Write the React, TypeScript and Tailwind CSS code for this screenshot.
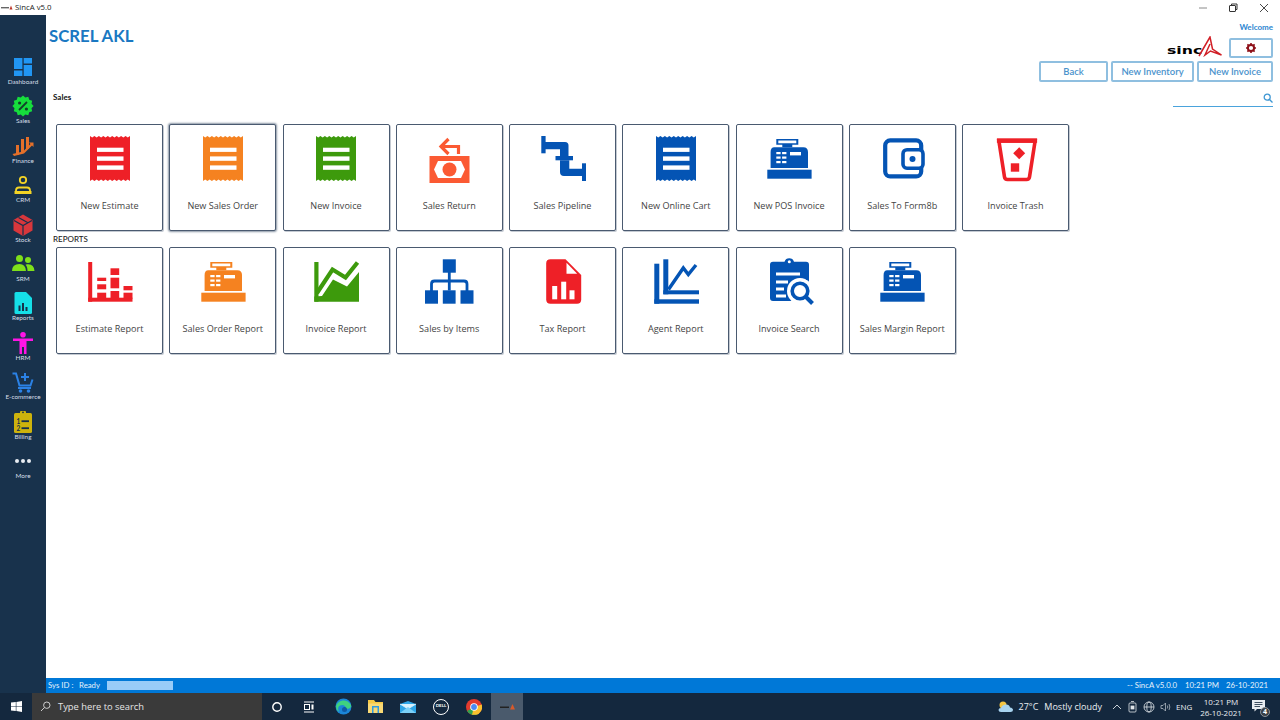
import React from "react";

const zig = (x0: number, x1: number, yTop: number, yBot: number, n: number, d = 1.6) => {
  const s = (x1 - x0) / n;
  let p = `M${x0} ${yTop}`;
  for (let i = 0; i < n; i++) p += `L${x0 + s * (i + 0.5)} ${yTop + d}L${x0 + s * (i + 1)} ${yTop}`;
  p += `V${yBot}`;
  for (let i = n - 1; i >= 0; i--) p += `L${x0 + s * (i + 0.5)} ${yBot - d}L${x0 + s * i} ${yBot}`;
  return p + "Z";
};

const I = ({ children }: { children: React.ReactNode }) => (
  <svg width="48" height="48" viewBox="0 0 48 48" className="shrink-0 overflow-visible">{children}</svg>
);

const Receipt = ({ c }: { c: string }) => (
  <I>
    <path d={zig(4, 44, 1, 46, 9)} fill={c} />
    <rect x="11" y="12.7" width="26.5" height="4.2" fill="#fff" />
    <rect x="11" y="21.4" width="26.5" height="4.4" fill="#fff" />
    <rect x="11" y="30.4" width="26.5" height="4.4" fill="#fff" />
  </I>
);

const Return = () => (
  <I>
    <rect x="4.5" y="21" width="40" height="27" fill="#fb5a33" />
    <path d="M13 26H36L40 34.5L36 43H13L9 34.5Z" fill="#fff" />
    <circle cx="24.5" cy="34.5" r="7" fill="#fb5a33" />
    <path d="M33.5 19V11.5H18" fill="none" stroke="#fb5a33" strokeWidth="3.2" />
    <path d="M23.5 4L16 11.5L23.5 19" fill="none" stroke="#fb5a33" strokeWidth="3.2" />
  </I>
);

const Pipeline = ({ c = "#0454b4" }: { c?: string }) => (
  <I>
    <rect x="2.3" y="1" width="4.3" height="17.3" fill={c} />
    <path d="M6 7H26Q29.5 7 29.5 10.5V21H21V14.3H6Z" fill={c} />
    <rect x="16.5" y="21" width="17.5" height="4.3" fill={c} />
    <path d="M21 25.3H30.3V33.7H44V41H25Q21 41 21 37Z" fill={c} />
    <rect x="43" y="28.3" width="4" height="17.7" fill={c} />
  </I>
);

const Register = ({ c }: { c: string }) => (
  <I>
    <g transform="translate(-0.7 0)">
      <path fillRule="evenodd" d="M12 4H34V9.7H28V12.3H18V9.7H12ZM14 5.5V8.2H32V5.5Z" fill={c} />
      <path d="M10 12.3H39Q43.7 12.3 43.7 17V33H6.3V17Q6.3 12.3 10 12.3Z" fill={c} />
      <rect x="3" y="34.7" width="44.3" height="9" fill={c} />
      {[17, 21.5, 26].map((y) => (
        <g key={y}>
          <rect x="12" y={y} width="4.3" height="2.2" fill="#fff" />
          <rect x="17.8" y={y} width="4.3" height="2.2" fill="#fff" />
        </g>
      ))}
      <rect x="25.7" y="17" width="11" height="3.4" fill="#fff" />
    </g>
  </I>
);

const Wallet = () => (
  <I>
    <g transform="translate(-1.5 0)">
      <rect x="8.7" y="5.4" width="36" height="36" rx="5" fill="none" stroke="#0454b4" strokeWidth="4.2" />
      <rect x="26.5" y="14.7" width="20" height="18.5" rx="4" fill="#fff" stroke="#0454b4" strokeWidth="3.6" />
      <circle cx="36" cy="24" r="3" fill="#0454b4" />
    </g>
  </I>
);

const Trash = () => (
  <I>
    <g transform="translate(-2.5 0)">
      <path d="M9.4 6H45.6L40 42Q39.6 44.5 37 44.5H18Q15.4 44.5 15 42Z" fill="none" stroke="#ee2027" strokeWidth="3.6" />
      <rect x="7.4" y="3.3" width="40.2" height="4.5" fill="#ee2027" />
      <path d="M29.7 12.3L35.7 18.3L29.7 24.3L23.7 18.3Z" fill="#ee2027" />
      <rect x="21.3" y="28.3" width="8.4" height="8.4" fill="#ee2027" />
    </g>
  </I>
);

const EstimateReport = () => (
  <I>
    <g fill="#ee2027">
      <rect x="2.2" y="4" width="4" height="39.7" />
      <rect x="2.2" y="39.7" width="44.3" height="4" />
      <rect x="11.2" y="19.7" width="9" height="3.3" />
      <rect x="11.2" y="26.3" width="9" height="5" />
      <rect x="11.2" y="34.7" width="9" height="6" />
      <rect x="24.5" y="10.3" width="8.7" height="6.7" />
      <rect x="24.5" y="19.7" width="8.7" height="10.6" />
      <rect x="24.5" y="33" width="8.7" height="8" />
      <rect x="37.5" y="28" width="9" height="4.3" />
      <rect x="37.5" y="34.7" width="9" height="6" />
    </g>
  </I>
);

const InvoiceReport = () => (
  <I>
    <g fill="#3d9a0c">
      <rect x="2.3" y="4" width="4.2" height="39.7" />
      <path d="M2.3 43.7V38.5L10 38L21 21.5L35 28.5L47 14V43.7Z" />
    </g>
    <path d="M5 35L20.5 11.5L33.5 19.5L45.5 4.5" fill="none" stroke="#3d9a0c" strokeWidth="4.2" />
  </I>
);

const SalesByItems = () => (
  <I>
    <g fill="#0454b4">
      <rect x="17.8" y="1.3" width="13" height="13.4" />
      <rect x="0" y="32.3" width="13" height="13.4" />
      <rect x="17.8" y="32.3" width="12.8" height="13.4" />
      <rect x="35.5" y="32.3" width="13" height="13.4" />
    </g>
    <path d="M24.3 14V32.5M6.5 33V26Q6.5 23 9.5 23H39Q42 23 42 26V33" fill="none" stroke="#0454b4" strokeWidth="2.8" />
  </I>
);

const TaxReport = () => (
  <I>
    <path d="M11.5 1.3H26.5L42.2 17V41.5Q42.2 45.7 38 45.7H11.5Q7.2 45.7 7.2 41.5V5.5Q7.2 1.3 11.5 1.3Z" fill="#ee2027" />
    <path d="M27.5 4.7L38.2 15.7H27.5Z" fill="#fff" />
    <rect x="13.2" y="28" width="5" height="13.3" fill="#fff" />
    <rect x="22.2" y="23.7" width="5" height="17.6" fill="#fff" />
    <rect x="30.5" y="32.3" width="5" height="9" fill="#fff" />
  </I>
);

const AgentReport = () => (
  <I>
    <g fill="#0454b4">
      <rect x="2.3" y="5.7" width="5" height="40" />
      <rect x="2.3" y="41.3" width="44.7" height="4.4" />
      <rect x="11.3" y="1.3" width="5" height="35" />
      <rect x="11.3" y="32.3" width="35.7" height="4" />
    </g>
    <path d="M16.5 31.5L31.3 10L36.3 16.5L44 7" fill="none" stroke="#0454b4" strokeWidth="3.4" />
  </I>
);

const InvoiceSearch = () => (
  <I>
    <path d="M8 3.7H19.5A5 5 0 0 1 29 3.7H41Q44 3.7 44 6.7V43H8Q5 43 5 40V6.7Q5 3.7 8 3.7Z" fill="#0454b4" />
    <circle cx="24.3" cy="3.8" r="1.5" fill="#fff" />
    <rect x="11" y="14.5" width="24" height="3" fill="#fff" />
    <rect x="11" y="22.5" width="12" height="3" fill="#fff" />
    <rect x="11" y="29.5" width="8" height="3" fill="#fff" />
    <rect x="11" y="36.5" width="10" height="3" fill="#fff" />
    <circle cx="35" cy="33" r="13" fill="#fff" />
    <rect x="41" y="14" width="3" height="8" fill="#0454b4" />
    <circle cx="35" cy="33" r="7.8" fill="#fff" stroke="#0454b4" strokeWidth="3.6" />
    <path d="M40.5 38.5L47.5 45.5" stroke="#0454b4" strokeWidth="4" />
  </I>
);

type T = { label: string; icon: React.ReactNode; active?: boolean };

const row1: T[] = [
  { label: "New Estimate", icon: <Receipt c="#ee2027" /> },
  { label: "New Sales Order", icon: <Receipt c="#f58220" />, active: true },
  { label: "New Invoice", icon: <Receipt c="#3d9a0c" /> },
  { label: "Sales Return", icon: <Return /> },
  { label: "Sales Pipeline", icon: <Pipeline /> },
  { label: "New Online Cart", icon: <Receipt c="#0454b4" /> },
  { label: "New POS Invoice", icon: <Register c="#0454b4" /> },
  { label: "Sales To Form8b", icon: <Wallet /> },
  { label: "Invoice Trash", icon: <Trash /> },
];
const row2: T[] = [
  { label: "Estimate Report", icon: <EstimateReport /> },
  { label: "Sales Order Report", icon: <Register c="#f58220" /> },
  { label: "Invoice Report", icon: <InvoiceReport /> },
  { label: "Sales by Items", icon: <SalesByItems /> },
  { label: "Tax Report", icon: <TaxReport /> },
  { label: "Agent Report", icon: <AgentReport /> },
  { label: "Invoice Search", icon: <InvoiceSearch /> },
  { label: "Sales Margin Report", icon: <Register c="#0454b4" /> },
];

const Tile = ({ t }: { t: T }) => (
  <div
    className={`w-[107px] h-[107px] shrink-0 flex flex-col items-center pt-[10px] bg-white rounded-[2px] border border-[#4a5a70] ${
      t.active ? "shadow-[0_0_2px_1px_#8a96a5]" : "shadow-[1px_1px_0_0_#c4cad2]"
    }`}
  >
    {t.icon}
    <div className="mt-[15.5px] w-full text-center text-[9.1px] leading-[13px] font-medium text-[#444] font-['Open_Sans',sans-serif] whitespace-nowrap overflow-hidden">
      {t.label}
    </div>
  </div>
);

const SI = ({ children }: { children: React.ReactNode }) => (
  <svg width="24" height="24" viewBox="0 0 24 24" className="shrink-0 overflow-visible">{children}</svg>
);

const starPts = (() => {
  const pts: string[] = [];
  const n = 12;
  for (let i = 0; i < n * 2; i++) {
    const r = i % 2 === 0 ? 10.6 : 8.8;
    const a = (Math.PI * i) / n;
    pts.push(`${(12 + r * Math.sin(a)).toFixed(2)},${(12 - r * Math.cos(a)).toFixed(2)}`);
  }
  return pts.join(" ");
})();

const side: { label: string; icon: React.ReactNode }[] = [
  {
    label: "Dashboard",
    icon: (
      <SI>
        <g fill="#2196f3">
          <rect x="3" y="3" width="8.4" height="11" />
          <rect x="3" y="15.5" width="8.4" height="5.5" />
          <rect x="12.7" y="3" width="8.3" height="5.5" />
          <rect x="12.7" y="10" width="8.3" height="11" />
        </g>
      </SI>
    ),
  },
  {
    label: "Sales",
    icon: (
      <SI>
        <polygon points={starPts} fill="#16dd3c" />
        <path d="M8 16L16 8" stroke="#12402a" strokeWidth="1.8" />
        <circle cx="8.6" cy="9" r="1.6" fill="#12402a" />
        <circle cx="15.4" cy="15" r="1.6" fill="#12402a" />
      </SI>
    ),
  },
  {
    label: "Finance",
    icon: (
      <SI>
        <g fill="#e4702a">
          <rect x="5" y="11" width="3" height="10" />
          <rect x="10" y="5" width="3" height="13" />
          <rect x="15" y="3" width="3" height="12" />
          <path d="M1.5 20L3 22L13 19.5L21 11.5L22.5 13V8.5H18L19.5 10L12 17.5Z" />
        </g>
      </SI>
    ),
  },
  {
    label: "CRM",
    icon: (
      <SI>
        <circle cx="12" cy="7" r="3.2" fill="none" stroke="#f4d425" strokeWidth="1.8" />
        <path d="M5 20V17.5Q5 14.5 8 14.5H16Q19 14.5 19 17.5V20Z" fill="none" stroke="#f4d425" strokeWidth="1.8" />
        <rect x="3.5" y="18" width="17" height="3" fill="#f4d425" />
      </SI>
    ),
  },
  {
    label: "Stock",
    icon: (
      <SI>
        <path d="M12 1.5L21.5 7V17.5L12 23L2.5 17.5V7Z" fill="#d8373c" />
        <path d="M3 7.5L12 12.5L21 7.5M12 12.5V22.5M7.5 4.5L16.5 9.5" fill="none" stroke="#16304c" strokeWidth="1.2" />
      </SI>
    ),
  },
  {
    label: "SRM",
    icon: (
      <SI>
        <g fill="#7fe01a">
          <circle cx="8.5" cy="6.5" r="3.5" />
          <circle cx="17" cy="8" r="3" />
          <path d="M1 19Q1 12 8.5 12Q14.5 12 15 19Z" />
          <path d="M16 12.3Q23 11.5 23.5 19H16.5Q16.5 14.5 14.5 12.8Z" />
        </g>
      </SI>
    ),
  },
  {
    label: "Reports",
    icon: (
      <SI>
        <path d="M5 1H15L21 7V21.5Q21 23 19.5 23H5Q3.5 23 3.5 21.5V2.5Q3.5 1 5 1Z" fill="#15dfe8" />
        <rect x="7.5" y="14.5" width="2" height="5.5" fill="#16304c" />
        <rect x="11" y="12" width="2" height="8" fill="#16304c" />
        <rect x="14.5" y="16" width="2" height="4" fill="#16304c" />
      </SI>
    ),
  },
  {
    label: "HRM",
    icon: (
      <SI>
        <g fill="#ff14e6">
          <circle cx="12" cy="3.8" r="2.8" />
          <path d="M2 7.5H22V10H15.5V23H13V16H11V23H8.5V10H2Z" />
        </g>
      </SI>
    ),
  },
  {
    label: "E-commerce",
    icon: (
      <SI>
        <path d="M1.5 3.5H5L8.5 15.5H19.5L21.5 9.5" fill="none" stroke="#2b82e6" strokeWidth="2" />
        <path d="M7 18H20" stroke="#2b82e6" strokeWidth="2" />
        <path d="M14 3V11M10 7H18" stroke="#2b82e6" strokeWidth="2" />
        <circle cx="9.5" cy="21" r="1.8" fill="#2b82e6" />
        <circle cx="17.5" cy="21" r="1.8" fill="#2b82e6" />
      </SI>
    ),
  },
  {
    label: "Billing",
    icon: (
      <SI>
        <rect x="3" y="3" width="18" height="20" rx="1.5" fill="#cdb30c" />
        <rect x="9" y="1" width="6" height="3" rx="1" fill="#cdb30c" />
        <circle cx="12" cy="2.3" r="0.9" fill="#16304c" />
        <text x="5.5" y="13.5" fontSize="6.5" fontWeight="700" fill="#16304c" fontFamily="Lato, sans-serif">1</text>
        <rect x="10.5" y="10.3" width="7.5" height="1.8" fill="#16304c" />
        <text x="5.5" y="20.5" fontSize="6.5" fontWeight="700" fill="#16304c" fontFamily="Lato, sans-serif">2</text>
        <rect x="10.5" y="17.3" width="7.5" height="1.8" fill="#16304c" />
      </SI>
    ),
  },
  {
    label: "More",
    icon: (
      <SI>
        <circle cx="6" cy="12" r="2" fill="#e8edf2" />
        <circle cx="12" cy="12" r="2" fill="#e8edf2" />
        <circle cx="18" cy="12" r="2" fill="#e8edf2" />
      </SI>
    ),
  },
];

const Btn = ({ w, children }: { w: string; children: React.ReactNode }) => (
  <div className={`${w} h-[21px] flex items-center justify-center pt-[1px] rounded-[2px] border-2 border-[#8fbfe0] text-[9.5px] font-semibold text-[#4a92cc] bg-white`}>
    {children}
  </div>
);

export default function App() {
  return (
    <div className="w-[1280px] h-[720px] flex flex-col overflow-hidden bg-white font-['Lato',sans-serif]">
      {/* title bar */}
      <div className="h-[15px] shrink-0 flex items-center bg-white">
        <svg width="12" height="5" viewBox="0 0 12 5" className="ml-[1px]">
          <rect x="0" y="2" width="8" height="1.4" fill="#666" />
          <path d="M8.5 4.5L10 0.5L11.5 4.5Z" fill="#c0392b" />
        </svg>
        <span className="ml-[2px] text-[7.8px] leading-[15px] text-[#222] font-['Open_Sans',sans-serif]">SincA v5.0</span>
        <div className="ml-auto flex items-center">
          <div className="w-[30px] flex justify-center">
            <svg width="10" height="10" viewBox="0 0 10 10"><path d="M1 5H9" stroke="#8a8a8a" strokeWidth="1" /></svg>
          </div>
          <div className="w-[30px] flex justify-center">
            <svg width="10" height="10" viewBox="0 0 10 10" fill="none" stroke="#333" strokeWidth="1">
              <rect x="1.5" y="2.5" width="6" height="6" rx="0.5" />
              <path d="M3.5 2.5V1H9V6.5H7.5" />
            </svg>
          </div>
          <div className="w-[32px] flex justify-center">
            <svg width="10" height="10" viewBox="0 0 10 10"><path d="M1 1L9 9M9 1L1 9" stroke="#333" strokeWidth="0.9" /></svg>
          </div>
        </div>
      </div>

      <div className="flex-1 flex min-h-0">
        {/* sidebar */}
        <div className="w-[46px] shrink-0 bg-[#18324c] flex flex-col items-center pt-[40px]">
          {side.map((s) => (
            <div key={s.label} className="h-[39.4px] shrink-0 flex flex-col items-center">
              {s.icon}
              <span className="-mt-[2px] text-[6.4px] leading-[9px] text-[#d5dfe8] whitespace-nowrap">{s.label}</span>
            </div>
          ))}
        </div>

        {/* main */}
        <div className="flex-1 flex flex-col min-w-0">
          <div className="h-[67px] shrink-0 flex justify-between pr-[7px] pl-[3px]">
            <div className="mt-[11px] text-[16.8px] leading-[20px] font-bold text-[#1a78c2]">SCREL AKL</div>
            <div className="flex flex-col items-end">
              <div className="mt-[8px] h-[8px] text-[8px] leading-[8px] font-bold text-[#2c86d1]">Welcome</div>
              <div className="mt-[7px] h-[20px] flex items-center">
                <div className="relative w-[55px] h-[20px]">
                  <span className="absolute left-0 top-[6px] text-[10.5px] leading-[12px] font-bold text-black font-['DejaVu_Sans',sans-serif] origin-left scale-x-[1.5]">sinc</span>
                  <svg width="24" height="21" viewBox="0 0 24 21" className="absolute right-[0px] top-[-2px]">
                    <path d="M1 20L12 1L14.5 13L23.5 19L12.5 15L7 19L12 8" fill="none" stroke="#d11f26" strokeWidth="1.5" />
                  </svg>
                </div>
                <div className="ml-[7px] w-[44px] h-[20px] flex items-center justify-center rounded-[2px] border-2 border-[#8fbfe0] bg-white">
                  <svg width="10" height="10" viewBox="0 0 10 10">
                    <circle cx="5" cy="5" r="3.1" fill="none" stroke="#8e1119" strokeWidth="2" />
                    <path d="M5 0V2M5 8V10M0 5H2M8 5H10M1.4 1.4L2.8 2.8M7.2 7.2L8.6 8.6M8.6 1.4L7.2 2.8M2.8 7.2L1.4 8.6" stroke="#8e1119" strokeWidth="1.6" />
                  </svg>
                </div>
              </div>
              <div className="mt-[3px] flex gap-[3px]">
                <Btn w="w-[69px]">Back</Btn>
                <Btn w="w-[83px]">New Inventory</Btn>
                <Btn w="w-[76px]">New Invoice</Btn>
              </div>
            </div>
          </div>

          <div className="h-[26px] shrink-0 flex justify-between pl-[7px] pr-[7px]">
            <div className="mt-[11px] text-[8px] leading-[8px] font-bold text-[#111]">Sales</div>
            <div className="w-[100px] h-[25px] border-b border-[#4aa3dc] flex items-end justify-end pb-[3px]">
              <svg width="10" height="10" viewBox="0 0 10 10" fill="none" stroke="#3f97d3" strokeWidth="1.3">
                <circle cx="4.2" cy="4.2" r="3" />
                <path d="M6.5 6.5L9.5 9.5" />
              </svg>
            </div>
          </div>

          <div className="mt-[16px] ml-[10px] flex gap-[6.25px]">
            {row1.map((t) => <Tile key={t.label} t={t} />)}
          </div>
          <div className="h-[16px] pl-[7px] pt-[4px] text-[8px] leading-[9px] font-medium text-[#222]">REPORTS</div>
          <div className="ml-[10px] flex gap-[6.25px]">
            {row2.map((t) => <Tile key={t.label} t={t} />)}
          </div>

          {/* status bar */}
          <div className="mt-auto h-[15px] shrink-0 bg-[#0078d7] flex items-center pl-[2px] pr-[12px] text-[7.8px] text-[#e6f2fb]">
            <span className="w-[26px]">Sys ID :</span>
            <span className="ml-[5px] w-[21px]">Ready</span>
            <div className="ml-[7px] w-[66px] h-[9px] bg-[#99ccf8]" />
            <span className="ml-auto">-- SincA v5.0.0</span>
            <span className="ml-[8px]">10:21 PM</span>
            <span className="ml-[7px]">26-10-2021</span>
          </div>
        </div>
      </div>

      {/* taskbar */}
      <div className="h-[27px] shrink-0 bg-[#14283e] flex items-center text-white">
        <div className="w-[32px] flex justify-center">
          <svg width="11" height="11" viewBox="0 0 11 11" fill="#fff">
            <path d="M0 1.6L4.8 1V5.2H0ZM5.4 0.9L11 0V5.2H5.4ZM0 5.8H4.8V10L0 9.4ZM5.4 5.8H11V11L5.4 10.1Z" />
          </svg>
        </div>
        <div className="w-[230px] h-[27px] bg-[#3a3a3a] flex items-center pl-[8px] text-[9.35px] text-[#e4e4e4] font-['Open_Sans',sans-serif]">
          <svg width="11" height="11" viewBox="0 0 11 11" fill="none" stroke="#ddd" strokeWidth="0.9">
            <circle cx="6.8" cy="4.2" r="3.2" />
            <path d="M4.4 6.6L1 10" />
          </svg>
          <span className="ml-[7px] pt-[1px]">Type here to search</span>
        </div>
        <div className="ml-[9px] w-[12px] flex justify-center">
          <svg width="12" height="12" viewBox="0 0 12 12"><circle cx="6" cy="6" r="4.2" fill="none" stroke="#fff" strokeWidth="1.4" /></svg>
        </div>
        <div className="ml-[20px] w-[12px] flex justify-center">
          <svg width="12" height="12" viewBox="0 0 12 12" fill="none" stroke="#fff" strokeWidth="1">
            <path d="M1 1H11M1 11H11" />
            <rect x="1.5" y="3.5" width="5" height="5" />
            <path d="M9.5 3.5V8.5" strokeWidth="2" />
          </svg>
        </div>
        <div className="ml-[19px] w-[18px] flex justify-center">
          <svg width="17" height="17" viewBox="0 0 17 17">
            <circle cx="8.5" cy="8.5" r="8" fill="#1b86d8" />
            <path d="M1 8C3 2 12 0 16 7C16.5 11 13 11 11 10.5C11 8 8 6 5 7.5C3 8.5 2.5 11 4 14C2 12.5 1 10.5 1 8Z" fill="#3fd17f" />
            <circle cx="9.5" cy="11.5" r="2.5" fill="#0f5aa5" />
          </svg>
        </div>
        <div className="ml-[15px] w-[16px] flex justify-center">
          <svg width="15" height="13" viewBox="0 0 15 13">
            <path d="M0 0H6L7.5 2H15V13H0Z" fill="#f6c945" />
            <rect x="0" y="3.5" width="15" height="9.5" fill="#f9d975" />
            <rect x="4" y="6" width="7" height="7" fill="#2f9ae0" />
            <rect x="5.5" y="7.5" width="4" height="5.5" fill="#f9d975" />
          </svg>
        </div>
        <div className="ml-[16px] w-[17px] flex justify-center">
          <svg width="16" height="12" viewBox="0 0 16 12">
            <path d="M0 3L8 0L16 3V12H0Z" fill="#2ea6e8" />
            <path d="M0 3L8 8L16 3" fill="#d8f1fd" stroke="#d8f1fd" strokeWidth="0.8" />
            <path d="M0 12L8 6L16 12Z" fill="#7cd0f7" />
          </svg>
        </div>
        <div className="ml-[17px] w-[16px] h-[16px] rounded-full border border-white flex items-center justify-center text-[4.5px] font-bold leading-none">DELL</div>
        <div className="ml-[17px] w-[16px] flex justify-center">
          <svg width="16" height="16" viewBox="0 0 16 16">
            <circle cx="8" cy="8" r="8" fill="#e33b2e" />
            <path d="M8 8L1 12A8 8 0 0 0 12 15Z" fill="#2ea44f" />
            <path d="M8 8L15.7 5.5A8 8 0 0 1 10 15.8L6 15.8Z" fill="#fbc02d" />
            <circle cx="8" cy="8" r="3.8" fill="#fff" />
            <circle cx="8" cy="8" r="2.9" fill="#4a8af4" />
          </svg>
        </div>
        <div className="ml-[9px] w-[32px] h-[27px] bg-[#4a5a6c] flex items-center justify-center">
          <svg width="15" height="6" viewBox="0 0 15 6">
            <rect x="0" y="2.5" width="9" height="1.5" fill="#222" />
            <path d="M10 5.5L12.5 0L15 5.5Z" fill="#d65a2b" />
          </svg>
        </div>

        <div className="ml-auto flex items-center text-[#e9edf1] font-['Open_Sans',sans-serif]">
          <svg width="15" height="13" viewBox="0 0 15 13">
            <circle cx="5" cy="5" r="3.5" fill="#f4c542" />
            <path d="M3 12Q0.5 12 0.5 10Q0.5 8 3 8Q4 4.5 8 4.5Q11.5 4.5 12 7.5Q15 8 15 10Q15 12 12.5 12Z" fill="#a8d3ef" />
          </svg>
          <span className="ml-[6px] text-[9px]">27°C</span>
          <span className="ml-[6px] text-[9px]">Mostly cloudy</span>
          <svg width="10" height="10" viewBox="0 0 10 10" className="ml-[10px]" fill="none" stroke="#dfe4e9" strokeWidth="0.9"><path d="M1 7L5 3L9 7" /></svg>
          <svg width="10" height="12" viewBox="0 0 10 12" className="ml-[6px]" fill="none" stroke="#dfe4e9" strokeWidth="0.8">
            <rect x="1" y="2" width="7" height="9" rx="1" />
            <rect x="3" y="5" width="3" height="3" fill="#dfe4e9" />
            <path d="M3 0.5H6" />
          </svg>
          <svg width="12" height="12" viewBox="0 0 12 12" className="ml-[5px]" fill="none" stroke="#dfe4e9" strokeWidth="0.8">
            <circle cx="6" cy="6" r="5" />
            <ellipse cx="6" cy="6" rx="2.2" ry="5" />
            <path d="M1 6H11" />
          </svg>
          <svg width="11" height="10" viewBox="0 0 11 10" className="ml-[4.5px]" fill="none" stroke="#aeb7c0" strokeWidth="0.8">
            <path d="M1 3.5H3L5.5 1V9L3 6.5H1Z" />
            <path d="M7.3 3.5Q8.3 5 7.3 6.5M9 2Q10.7 5 9 8" />
          </svg>
          <span className="ml-[5.5px] text-[8px] w-[18px]">ENG</span>
          <div className="ml-[5px] w-[44px] flex flex-col items-center text-[8px] leading-[11px]">
            <span>10:21 PM</span>
            <span>26-10-2021</span>
          </div>
          <div className="relative ml-[9px] mr-[14px] w-[14px] h-[14px]">
            <svg width="13" height="12" viewBox="0 0 13 12" fill="#e9edf1">
              <path d="M0 0H13V9H5L2.5 11.5V9H0Z" />
              <path d="M2.5 2.5H10.5M2.5 4.5H10.5M2.5 6.5H8" stroke="#14283e" strokeWidth="0.8" />
            </svg>
            <div className="absolute right-[-4px] bottom-[-3px] w-[10px] h-[10px] rounded-full bg-[#3a3f45] border border-[#8a929a] flex items-center justify-center text-[7px] font-bold leading-none text-white">4</div>
          </div>
        </div>
      </div>
    </div>
  );
}
